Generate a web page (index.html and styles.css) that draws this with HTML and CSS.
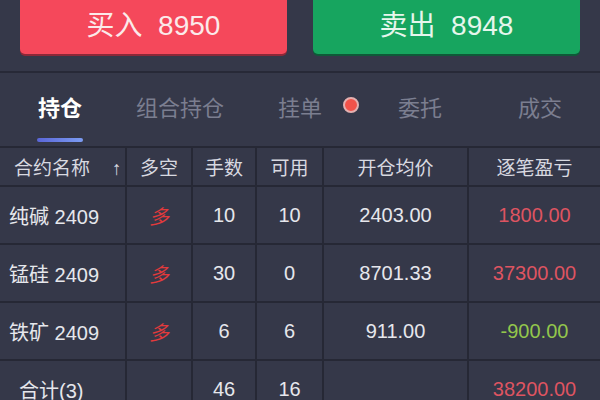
FILE: index.html
```html
<!DOCTYPE html>
<html>
  <head>
    <meta name="viewport" content="width=device-width,initial-scale=1.0">
    <title>持仓</title>
    <link rel="stylesheet" href="styles.css">
  </head>
  <body>
    <div class="actions">
      <button class="trade-btn buy">买入&nbsp;&nbsp;8950</button>
      <button class="trade-btn sell">卖出&nbsp;&nbsp;8948</button>
    </div>

    <div class="tabs">
      <div class="tab active">持仓</div>
      <div class="tab">组合持仓</div>
      <div class="tab">挂单<span class="dot"></span></div>
      <div class="tab">委托</div>
      <div class="tab">成交</div>
    </div>

    <table class="positions">
      <colgroup>
        <col class="c-name">
        <col class="c-dir">
        <col class="c-qty">
        <col class="c-avail">
        <col class="c-price">
        <col class="c-pnl">
      </colgroup>
      <thead>
        <tr>
          <th class="name-col"><span>合约名称</span><span class="sort">↑</span></th>
          <th>多空</th>
          <th>手数</th>
          <th>可用</th>
          <th>开仓均价</th>
          <th>逐笔盈亏</th>
        </tr>
      </thead>
      <tbody>
        <tr>
          <td class="name">纯碱 2409</td>
          <td class="long">多</td>
          <td>10</td>
          <td>10</td>
          <td>2403.00</td>
          <td class="up">1800.00</td>
        </tr>
        <tr>
          <td class="name">锰硅 2409</td>
          <td class="long">多</td>
          <td>30</td>
          <td>0</td>
          <td>8701.33</td>
          <td class="up">37300.00</td>
        </tr>
        <tr>
          <td class="name">铁矿 2409</td>
          <td class="long">多</td>
          <td>6</td>
          <td>6</td>
          <td>911.00</td>
          <td class="down">-900.00</td>
        </tr>
        <tr class="total">
          <td class="name">合计(3)</td>
          <td></td>
          <td>46</td>
          <td>16</td>
          <td></td>
          <td class="up">38200.00</td>
        </tr>
      </tbody>
    </table>
  </body>
</html>
```

FILE: styles.css
```css
body {
  margin: 0;
  background: #353849;
  font-family: "Liberation Sans", "Noto Sans CJK SC", sans-serif;
  color: #e6e7ec;
  overflow: hidden;
}

.actions {
  display: flex;
  gap: 26px;
  padding: 0 20px 17px;
  border-bottom: 2px solid #272937;
}

.trade-btn {
  flex: 1;
  height: 54px;
  border: none;
  border-radius: 0 0 5px 5px;
  font-family: inherit;
  font-size: 28px;
  padding-bottom: 10px;
  color: #fbeaea;
}

.buy { background: #f5485b; box-shadow: 0 2px 0 #8c2838; }
.sell { background: #17a55f; color: #e6f6ec; box-shadow: 0 2px 0 #0e5a38; }

.tabs {
  display: flex;
  height: 73px;
}

.tab {
  position: relative;
  width: 120px;
  text-align: center;
  font-size: 22px;
  line-height: 72px;
  color: #7b7e90;
}

.tab.active {
  color: #fff;
  font-weight: bold;
}

.tab.active::after {
  content: "";
  position: absolute;
  left: 37px;
  bottom: 4px;
  width: 46px;
  height: 4px;
  border-radius: 2px;
  background: linear-gradient(90deg, #5a66d8, #7c9cf2);
}

.dot {
  position: absolute;
  top: 24px;
  right: 1px;
  width: 12px;
  height: 12px;
  border-radius: 50%;
  background: #f2524a;
  border: 2px solid #e4b0b0;
}

.positions {
  width: 600px;
  border-collapse: collapse;
  table-layout: fixed;
}

.c-name { width: 126px; }
.c-dir { width: 66px; }
.c-qty { width: 64px; }
.c-avail { width: 67px; }
.c-price { width: 145px; }
.c-pnl { width: 132px; }

.positions th,
.positions td {
  border: 2px solid #262835;
  text-align: center;
  font-size: 20px;
  font-weight: normal;
  padding: 0;
}

.positions tr > :first-child { border-left: none; }
.positions tr > :last-child { border-right: none; }

.positions th {
  height: 37px;
  font-size: 19px;
  color: #d8d9e0;
}

.positions th.name-col {
  text-align: left;
  padding-left: 14px;
}
.sort { margin-left: 22px; }

.positions td { height: 56px; }

.positions td.name {
  text-align: left;
  padding-left: 9px;
}

.long {
  color: #e33a3c;
  font-style: italic;
}

.up { color: #de5461; }
.down { color: #93c64c; }

.total td.name { padding-left: 19px; }
```
